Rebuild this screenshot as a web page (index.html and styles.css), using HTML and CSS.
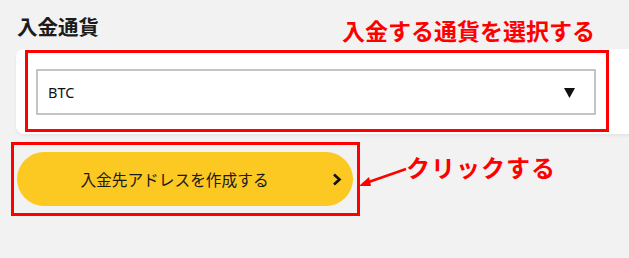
FILE: index.html
```html
<!DOCTYPE html>
<html lang="ja">
<head>
<meta charset="utf-8">
<link rel="stylesheet" href="styles.css">
</head>
<body>
<div class="page">
  <h2 class="heading">入金通貨</h2>
  <div class="card">
    <div class="select">
      <span class="select-value">BTC</span>
      <svg class="caret" width="11" height="10" viewBox="0 0 11 10"><polygon points="0,0 11,0 5.5,10" fill="#111"/></svg>
    </div>
  </div>
  <button class="btn">
    <span class="btn-label">入金先アドレスを作成する</span>
    <svg class="chev" width="10" height="13" viewBox="0 0 10 13"><polyline points="2,1.5 7.5,6.5 2,11.5" fill="none" stroke="#111" stroke-width="2.6"/></svg>
  </button>

  <div class="note-box note-box-select"></div>
  <div class="note-text note-text-select">入金する通貨を選択する</div>
  <div class="note-box note-box-btn"></div>
  <svg class="note-arrow" width="50" height="26" viewBox="0 0 50 26">
    <line x1="48" y1="3" x2="5" y2="18" stroke="#f00" stroke-width="2.4"/>
    <polygon points="1,20 11,11 13,20" fill="#f00"/>
  </svg>
  <div class="note-text note-text-btn">クリックする</div>
</div>
</body>
</html>
```

FILE: styles.css
```css
html, body {
  margin: 0;
  padding: 0;
  background: #f2f2f2;
  overflow: hidden;
}
body {
  width: 629px;
  height: 258px;
  font-family: "Noto Sans CJK JP", "Noto Sans", sans-serif;
  color: #1a1a1a;
}
.page {
  position: relative;
  padding: 14px 0 0 16px;
  height: 258px;
  box-sizing: border-box;
}
.heading {
  margin: 0 0 11px 1px;
  font-size: 20.5px;
  line-height: 24px;
  font-weight: 700;
  color: #1c1c1c;
}
.card {
  background: #fff;
  border-radius: 8px;
  margin-right: -20px;
  padding: 20px 20px 19px 20px;
  box-shadow: 0 2px 3px rgba(0,0,0,0.06);
}
.select {
  width: 560px;
  height: 46px;
  box-sizing: border-box;
  border: 2px solid #c4c4c4;
  background: #fff;
  display: flex;
  align-items: center;
  padding: 0 19px 0 10px;
}
.select-value {
  flex: 1;
  font-family: "Noto Sans", "Open Sans", sans-serif;
  font-size: 14.5px;
  color: #111;
}
.caret {
  display: block;
  margin-top: 1px;
}
.btn {
  margin-top: 18px;
  margin-left: 1px;
  width: 336px;
  height: 54px;
  border: 0;
  border-radius: 27px;
  background: #fcc822;
  display: flex;
  align-items: center;
  padding: 0 11px 0 0;
  font-family: "Noto Sans CJK JP", "Noto Sans", sans-serif;
  cursor: pointer;
}
.btn-label {
  flex: 1;
  text-align: center;
  font-size: 15.7px;
  color: #1a1a1a;
}
.chev {
  display: block;
}
.note-box {
  position: absolute;
  border: 3px solid #ff0000;
  box-sizing: border-box;
}
.note-box-select {
  left: 25px;
  top: 50px;
  width: 584px;
  height: 82px;
}
.note-box-btn {
  left: 11px;
  top: 142px;
  width: 349px;
  height: 74px;
}
.note-text {
  position: absolute;
  color: #ff0000;
  font-weight: 700;
  white-space: nowrap;
}
.note-text-select {
  left: 342px;
  top: 14px;
  font-size: 23px;
  line-height: 32px;
}
.note-text-btn {
  left: 406px;
  top: 150px;
  font-size: 24px;
  line-height: 34px;
  letter-spacing: 1px;
}
.note-arrow {
  position: absolute;
  left: 358px;
  top: 166px;
}
```
